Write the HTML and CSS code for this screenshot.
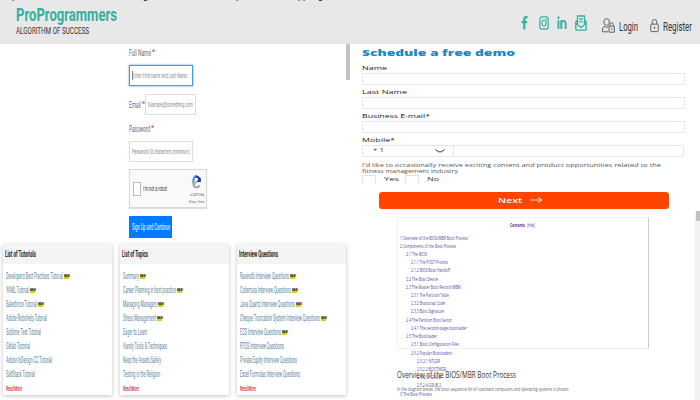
FILE: index.html
```html
<!DOCTYPE html>
<html lang="en">
<head>
<meta charset="utf-8">
<title>ProProgrammers</title>
<link rel="stylesheet" href="styles.css">
</head>
<body>
<header class="top">
  <div class="cut"><span>p</span><span>g</span><span>p</span><span>pp</span><span>g</span></div>
  <div class="brand">
    <div class="logo" data-w="101">ProProgrammers</div>
    <div class="tag" data-w="73">ALGORITHM OF SUCCESS</div>
  </div>
  <nav class="nav">
    <svg class="fb" viewBox="0 0 8 16"><path d="M7.5 1.2H5.8Q3.8 1.2 3.8 3.5V15.5M.6 7H7" fill="none" stroke="#35af9f" stroke-width="2.5"/></svg>
    <svg class="ig" viewBox="0 0 10 14"><g fill="none" stroke="#35af9f" stroke-width="1.2"><rect x=".8" y=".8" width="8.4" height="12.4" rx="2.5"/><ellipse cx="5" cy="7" rx="2.1" ry="3"/></g><circle cx="7.4" cy="3.4" r=".6" fill="#35af9f"/></svg>
    <svg class="li" viewBox="0 0 10 14"><path d="M1.2 4.5V14M4.2 14V4.5M4.2 8Q4.5 5.3 6.5 5.3Q8.9 5.3 8.9 8.3V14" fill="none" stroke="#35af9f" stroke-width="2"/><ellipse cx="1.2" cy="1.8" rx="1.1" ry="1.5" fill="#35af9f"/></svg>
    <svg class="ml" viewBox="0 0 12 16"><path d="M2.5 5L.8 6.8V14Q.8 15.2 2 15.2H10Q11.2 15.2 11.2 14V6.8L9.5 5M.8 8.5L6 12.5L11.2 8.5M2.5 9V1H9.5V9M4.3 4H7.7M4.3 6.7H7.7" fill="none" stroke="#35af9f" stroke-width="1.3"/></svg>
    <svg class="us" viewBox="0 0 13 15"><g fill="none" stroke="#555" stroke-width=".9"><ellipse cx="4.6" cy="4" rx="2.8" ry="3.4"/><path d="M6 13.8H.6V11Q.6 8.8 3 8.4L4.6 9.6L6.4 8.4M7 8.2H12.3V14.2H7ZM8 8V6.5Q8 4.6 9.6 4.6T11.3 6.5V8M9.7 10.2V12"/></g></svg>
    <span class="link lg" data-w="19">Login</span>
    <svg class="lk" viewBox="0 0 10 15"><g fill="none" stroke="#555" stroke-width="1"><rect x=".8" y="6" width="8.4" height="8.3" rx="1"/><path d="M2.5 6V3.5Q2.5 .8 5 .8T7.5 3.5V6M5 8.7V11.4"/></g></svg>
    <span class="link" data-w="29">Register</span>
  </nav>
</header>
<main class="main">
  <section class="left">
    <div class="thumb-l"></div>
    <form class="signup">
      <div class="lab"><span data-w="22">Full Name</span> <b>*</b></div>
      <div class="inp focus"><i class="caret"></i><span data-w="54">Enter First name and Last Name</span></div>
      <div class="email"><span class="lab"><span data-w="12">Email</span> <b>*</b></span><div class="inp"><span data-w="45">Example@something.com</span></div></div>
      <div class="lab pw"><span data-w="21">Password</span> <b>*</b></div>
      <div class="inp"><span data-w="58">Password (8 characters minimum)</span></div>
      <div class="captcha">
        <i class="box"></i><span class="robot" data-w="24">I'm not a robot</span>
        <div class="rc">
          <svg viewBox="0 0 10 16"><g fill="none" stroke-width="2.5"><path d="M1.5 8Q1.5 1.8 5 1.8" stroke="#4a90e2"/><path d="M4 1.8Q8.5 1.8 8.5 8" stroke="#1c3aa9"/><path d="M1.5 8Q1.5 14 5 14Q7.5 14 8.5 11.5" stroke="#ababab"/></g><path d="M4.5 8H9.7V3Z" fill="#1c3aa9"/><path d="M.3 8H6L3 11Z" fill="#ababab"/></svg>
          <span class="rt" data-w="14">reCAPTCHA</span>
          <span class="rp" data-w="15">Privacy - Terms</span>
        </div>
      </div>
      <div class="sign"><span data-w="38">Sign Up and Continue</span></div>
    </form>
    <div class="cards">
      <article class="card"><h2><span data-w="31">List of Tutorials</span></h2>
        <ul>
          <li><span data-w="57">Developers Best Practices Tutorial</span><em>NEW</em></li>
          <li><span data-w="23">YAML Tutorial</span><em>NEW</em></li>
          <li><span data-w="31">Salesforce Tutorial</span><em>NEW</em></li>
          <li><span data-w="41">Adobe Robohelp Tutorial</span></li>
          <li><span data-w="35">Sublime Text Tutorial</span></li>
          <li><span data-w="24">Gitlab Tutorial</span></li>
          <li><span data-w="46">Adobe InDesign CC Tutorial</span></li>
          <li><span data-w="29">SaltStack Tutorial</span></li>
          <li class="more"><span data-w="16">Read More</span></li>
        </ul></article>
      <article class="card"><h2><span data-w="26">List of Topics</span></h2>
        <ul>
          <li><span data-w="16">Summary</span><em>NEW</em></li>
          <li><span data-w="53">Career Planning in best practice</span><em>NEW</em></li>
          <li><span data-w="34">Managing Managers</span><em>NEW</em></li>
          <li><span data-w="33">Stress Management</span><em>NEW</em></li>
          <li><span data-w="24">Eager to Learn</span></li>
          <li><span data-w="44">Handy Tools &amp; Techniques</span></li>
          <li><span data-w="38">Keep the Assets Safely</span></li>
          <li><span data-w="37">Testing is the Religion</span></li>
          <li class="more"><span data-w="16">Read More</span></li>
        </ul></article>
      <article class="card"><h2><span data-w="39">Interview Questions</span></h2>
        <ul>
          <li><span data-w="49">Ravendb Interview Questions</span><em>NEW</em></li>
          <li><span data-w="51">Cobertura Interview Questions</span><em>NEW</em></li>
          <li><span data-w="55">Java Quartz Interview Questions</span><em>NEW</em></li>
          <li><span data-w="80">Cheque Truncation System Interview Questions</span><em>NEW</em></li>
          <li><span data-w="41">ECS Interview Questions</span><em>NEW</em></li>
          <li><span data-w="44">RTGS Interview Questions</span></li>
          <li><span data-w="57">Private Equity Interview Questions</span></li>
          <li><span data-w="60">Excel Formulas Interview Questions</span></li>
          <li class="more"><span data-w="16">Read More</span></li>
        </ul></article>
    </div>
  </section>
  <section class="right">
    <form class="demo">
      <h1><span data-w="153">Schedule a free demo</span></h1>
      <div class="dl"><span data-w="25">Name</span></div><div class="di"></div>
      <div class="dl"><span data-w="45">Last Name</span></div><div class="di"></div>
      <div class="dl"><span data-w="68">Business E-mail*</span></div><div class="di"></div>
      <div class="dl"><span data-w="33">Mobile*</span></div>
      <div class="di phone"><div class="code"><span data-w="11">+ 1</span><svg viewBox="0 0 10 4"><path d="M.5 .7L3.5 2.8H6.5L9.5 .7" fill="none" stroke="#333" stroke-width="1"/></svg></div></div>
      <div class="consent"><span data-w="299">I'd like to occasionally receive exciting content and product opportunities related to the</span><span data-w="96">fitness management industry</span></div>
      <div class="checks"><i></i><span data-w="15">Yes</span><i></i><span data-w="12">No</span></div>
      <div class="next"><span data-w="24">Next</span><svg viewBox="0 0 13 6"><path d="M0 3H12M8 .6L12 3L8 5.4" fill="none" stroke="#fff" stroke-width=".8"/></svg></div>
    </form>
    <div class="article">
      <div class="doc">
        <div class="toc">
          <div class="ct"><b data-w="15">Contents</b><span data-w="8">[hide]</span></div>
          <ol>
            <li><span data-w="68">1 Overview of the BIOS/MBR Boot Process</span></li>
            <li><span data-w="56">2 Components of the Boot Process</span></li>
            <li class="b"><span data-w="21">2.1 The BIOS</span></li>
            <li class="c"><span data-w="37">2.1.1 The POST Process</span></li>
            <li class="c"><span data-w="39">2.1.2 BIOS Boot Handoff</span></li>
            <li class="b"><span data-w="32">2.2 The Boot Device</span></li>
            <li class="b"><span data-w="55">2.3 The Master Boot Record (MBR)</span></li>
            <li class="c"><span data-w="38">2.3.1 The Partition Table</span></li>
            <li class="c"><span data-w="34">2.3.2 Bootstrap Code</span></li>
            <li class="c"><span data-w="33">2.3.3 Boot Signature</span></li>
            <li class="b"><span data-w="46">2.4 The Partition Boot Sector</span></li>
            <li class="c"><span data-w="56">2.4.1 The second-stage bootloader</span></li>
            <li class="b"><span data-w="31">2.5 The Bootloader</span></li>
            <li class="c"><span data-w="48">2.5.1 Boot Configuration Files</span></li>
            <li class="c"><span data-w="41">2.5.2 Popular Bootloaders</span></li>
            <li class="d"><span data-w="23">2.5.2.1 NTLDR</span></li>
            <li class="d"><span data-w="29">2.5.2.2 BOOTMGR</span></li>
            <li class="d"><span data-w="24">2.5.2.3 GRUB</span></li>
            <li class="d"><span data-w="24">2.5.2.4 GRUB 2</span></li>
            <li><span data-w="32">3 The Boot Process</span></li>
          </ol>
        </div>
        <div class="over">
          <h3><span data-w="119">Overview of the BIOS/MBR Boot Process</span></h3>
          <p><span data-w="172">In the diagram below, the boot sequence for all standard computers and operating systems is shown:</span></p>
        </div>
      </div>
      <div class="track"><div class="thumb"></div></div>
    </div>
  </section>
</main>
<script src="fit.js"></script>
</body>
</html>
```
FILE: styles.css
```css
* { box-sizing: border-box; }
body { margin: 0; width: 700px; height: 400px; overflow: hidden; background: #fff; font-family: Roboto, "Liberation Sans", sans-serif; color: #333; }
h1, h2, h3, p, ul, ol { margin: 0; padding: 0; list-style: none; font-weight: normal; }
svg { display: block; flex: none; }
[data-w] { display: inline-block; white-space: nowrap; flex: none; }
.fit { display: inline-block; transform-origin: 0 50%; white-space: nowrap; }

.top { position: relative; height: 44px; background: #e8e8e8; display: flex; justify-content: space-between; }
.cut { position: absolute; left: 12px; top: -9px; height: 11px; display: flex; font-size: 9px; line-height: 11px; color: #222; }
.cut span:nth-child(1) { width: 131px; }
.cut span:nth-child(2) { width: 93px; }
.cut span:nth-child(3) { width: 62px; }
.cut span:nth-child(4) { width: 20px; }
.brand { padding: 4px 0 0 16px; }
.logo { display: block; height: 20px; line-height: 21px; font-size: 19px; font-weight: 700; color: #35af9f; }
.tag { display: block; height: 13px; line-height: 14px; font-size: 9.5px; color: #333; }
.nav { display: flex; align-items: flex-start; width: 180px; }
.fb { width: 7px; height: 16px; margin: 15px 0 0 1px; }
.ig { width: 10px; height: 14px; margin: 16px 0 0 11px; }
.li { width: 10px; height: 13px; margin: 16px 0 0 8px; }
.ml { width: 12px; height: 16px; margin: 15px 0 0 8px; }
.us { width: 13px; height: 15px; margin: 18px 0 0 15px; }
.link { font-size: 12px; line-height: 14px; margin: 20px 0 0 4px; color: #333; }
.lk { width: 9px; height: 15px; margin: 18px 0 0 12px; }

.main { display: flex; height: 356px; }
.left { position: relative; width: 350px; }
.thumb-l { position: absolute; right: 0; top: 0; width: 4px; height: 36px; background: #c4c4c4; }
.signup { height: 198px; padding: 3px 0 0 129px; font-size: 8.8px; color: #667; }
.lab { display: flex; gap: 1px; height: 12px; line-height: 13px; }
.lab b { color: #d44; font-size: 7px; line-height: 11px; font-weight: 500; }
.inp { display: flex; width: 64px; height: 21px; border: 1px solid #ddd; padding-left: 2px; font-size: 8px; line-height: 20px; color: #8a8a8a; }
.inp.focus { margin-top: 6px; border-color: #4a9be0; box-shadow: 0 0 2px #4a9be0; align-items: center; }
.caret { width: 1px; height: 9px; background: #888; }
.email { display: flex; align-items: center; margin-top: 8px; }
.email .lab { width: 16px; }
.email .inp { width: 51px; }
.pw { margin: 8px 0 6px; }
.captcha { display: flex; align-items: center; width: 78px; height: 39px; margin-top: 7px; padding-left: 3px; border: 1px solid #dadada; background: #f9f9f9; box-shadow: 0 1px 1px #ddd; }
.box { width: 8px; height: 14px; border: 1px solid #bbb; background: #fff; }
.robot { margin-left: 2px; font-size: 7.5px; color: #333; }
.rc { display: flex; flex-direction: column; align-items: center; margin-left: 22px; width: 15px; line-height: 6px; }
.rc svg { width: 9px; height: 16px; margin-top: 1px; }
.rt { font-size: 4px; height: 6px; margin-top: 2px; color: #555; }
.rp { font-size: 3.5px; height: 6px; margin-top: 1px; color: #555; }
.sign { width: 43px; height: 22px; margin-top: 8px; padding-left: 3px; background: #007bff; color: #fff; font-size: 8.5px; font-weight: 400; line-height: 22px; }

.cards { display: flex; gap: 8px; padding: 2px 0 0 3px; }
.card { width: 109px; height: 151px; background: #fff; box-shadow: 0 1px 4px rgba(0,0,0,.24); }
.card h2 { height: 20px; padding-left: 2px; background: #f4f4f4; font-size: 9px; font-weight: 700; line-height: 21px; color: #222; }
.card ul { padding: 5px 0 0 3px; }
.card li { display: flex; align-items: center; gap: 1px; height: 14.1px; font-size: 8.2px; line-height: 14.6px; color: #537f9c; }
.card em { width: 5px; height: 4px; margin-top: 1px; background: #d8cc20; color: #111; font: bold 2.6px/4px "Liberation Sans", sans-serif; text-align: center; }
.card .more { color: #d22434; font-size: 6.8px; font-weight: 500; }

.right { width: 350px; }
.demo { height: 167px; padding-left: 12px; font-family: "Open Sans", sans-serif; }
.demo h1 { height: 20px; font-size: 8.6px; line-height: 19px; font-weight: 800; color: #1688cd; }
.dl { height: 8.8px; font-size: 5.8px; line-height: 8px; font-weight: 400; color: #222; }
.di { width: 323px; height: 12px; margin-bottom: 3.2px; border: 1px solid #e4e8ee; border-radius: 1px; }
.phone { width: 322px; }
.code { display: flex; align-items: center; justify-content: space-between; width: 91px; height: 10px; padding: 0 8px 0 10px; border-right: 1px solid #dfe4ec; font-size: 5.5px; line-height: 9px; }
.code svg { width: 10px; height: 4px; }
.consent { display: flex; flex-direction: column; padding-top: 2px; height: 14.6px; font-size: 4.8px; line-height: 6px; color: #555; }
.checks { display: flex; align-items: center; height: 8px; font-size: 6px; line-height: 8px; font-weight: 400; }
.checks i { width: 14px; height: 8px; border: 1px solid #dce1ea; border-bottom: 0; }
.checks span[data-w] { margin: 0 6px 0 8px; }
.next { display: flex; align-items: center; width: 290px; height: 17px; margin: 9px 0 0 17px; padding-left: 119px; gap: 8px; border-radius: 3px; background: #ff4500; color: #fff; font-size: 6.6px; font-weight: 600; line-height: 17px; }
.next svg { width: 13px; height: 6px; }

.article { display: flex; height: 189px; font-family: "Open Sans", sans-serif; }
.doc { position: relative; width: 345px; padding: 6px 0 0 47px; }
.toc { width: 252px; height: 132px; border: 1px solid #f3f3f3; border-right-color: #ccc; }
.ct { display: flex; gap: 2px; height: 15.5px; padding-left: 112px; font-size: 5px; line-height: 15px; color: #222; }
.ct span { color: #4338a0; }
.toc li { height: 8.23px; padding-left: 2px; font-size: 5.8px; line-height: 8.2px; color: #5149a0; }
.toc li.b { padding-left: 8px; }
.toc li.c { padding-left: 13px; }
.toc li.d { padding-left: 19px; }
.over { position: absolute; left: 47px; top: 157px; }
.over h3 { height: 15px; font-size: 9px; line-height: 14px; color: #333; }
.over p { height: 11px; margin-top: 1px; font-size: 5px; line-height: 11px; color: #666; }
.track { width: 5px; background: #f1f1f1; }
.thumb { width: 4px; height: 10px; margin-left: 1px; background: #c1c1c1; }
```
FILE: fit.js
```js
// Condenses or expands each label to the width given in data-w.
document.querySelectorAll('[data-w]').forEach(function (el) {
  var inner = document.createElement('span');
  inner.className = 'fit';
  while (el.firstChild) inner.appendChild(el.firstChild);
  el.appendChild(inner);
  var w = parseFloat(el.dataset.w);
  var natural = inner.getBoundingClientRect().width;
  el.style.width = w + 'px';
  inner.style.transform = 'scaleX(' + w / natural + ')';
});
```
